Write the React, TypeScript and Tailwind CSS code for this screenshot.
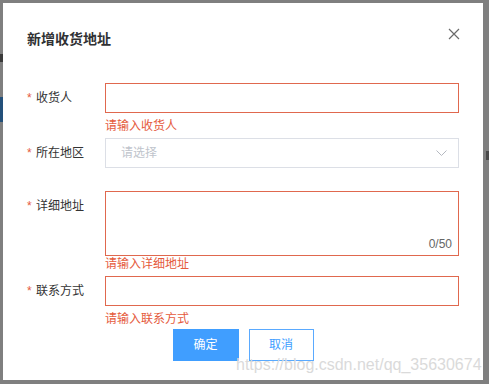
import React from "react";

const font = { fontFamily: '"Liberation Sans", "Noto Sans CJK SC", sans-serif' };

const Label: React.FC<{ text: string }> = ({ text }) => (
  <div className="w-[78px] h-[30px] flex items-center shrink-0 text-[12px] text-[#333]">
    <span className="w-[9px] text-[#e55a3c]">*</span>
    <span>{text}</span>
  </div>
);

const ErrorText: React.FC<{ text: string; className?: string }> = ({ text, className }) => (
  <div className={`ml-[78px] text-[12px] leading-[14px] text-[#e55a3c] ${className ?? ""}`}>{text}</div>
);

export default function App() {
  return (
    <div className="relative h-[384px] w-[489px] overflow-hidden bg-[#7f7f7f] pt-[3px] pl-[3px]" style={font}>
      {/* page behind the overlay */}
      <div className="absolute left-0 top-[97px] h-[25px] w-[3px] bg-[#23507a]" />
      <div className="absolute left-0 top-[54px] h-[8px] w-[3px] bg-[#3a3a3a]" />
      <div className="absolute right-0 top-[151px] h-[9px] w-[3px] bg-[#4a4a4a]" />

      <div className="relative w-[480px] h-[377px] bg-white px-[24px] pt-[27px]">
        <div className="text-[14px] leading-[18px] font-bold text-[#303133]">新增收货地址</div>
        <svg
          className="absolute top-[25px] right-[23px]"
          width="12"
          height="12"
          viewBox="0 0 12 12"
          fill="none"
          stroke="#6b6b6b"
          strokeWidth="1.2"
        >
          <path d="M1 1L11 11M11 1L1 11" />
        </svg>

        {/* 收货人 */}
        <div className="flex mt-[35px]">
          <Label text="收货人" />
          <div className="w-[354px] h-[30px] border border-[#e0684e]" />
        </div>
        <ErrorText text="请输入收货人" className="mt-[6px]" />

        {/* 所在地区 */}
        <div className="flex mt-[5px]">
          <Label text="所在地区" />
          <div className="w-[354px] h-[30px] border border-[#dcdfe6] flex items-center justify-between pl-[15px] pr-[11px]">
            <span className="text-[12px] text-[#c0c4cc]">请选择</span>
            <svg width="11" height="6" viewBox="0 0 11 6" fill="none" stroke="#b4b8c0" strokeWidth="1">
              <path d="M0.5 0.5L5.5 5.5L10.5 0.5" />
            </svg>
          </div>
        </div>

        {/* 详细地址 */}
        <div className="flex mt-[23px]">
          <Label text="详细地址" />
          <div className="relative w-[354px] h-[65px] border border-[#e0684e]">
            <span className="absolute right-[6px] bottom-[4px] text-[12px] leading-[14px] text-[#666]">0/50</span>
          </div>
        </div>
        <ErrorText text="请输入详细地址" className="mt-[1px]" />

        {/* 联系方式 */}
        <div className="flex mt-[5px]">
          <Label text="联系方式" />
          <div className="w-[354px] h-[30px] border border-[#e0684e]" />
        </div>
        <ErrorText text="请输入联系方式" className="mt-[6px]" />

        <div className="flex justify-center gap-[10px] mt-[3px]">
          <button className="w-[66px] h-[32px] bg-[#409eff] text-white text-[12px]">确定</button>
          <button className="w-[65px] h-[32px] bg-white border border-[#5aaaff] text-[#409eff] text-[12px]">取消</button>
        </div>

        {/* watermark */}
        <div className="absolute left-[233px] top-[353px] text-[16px] leading-[18px] text-[#dadada] whitespace-nowrap pointer-events-none">
          https://blog.csdn.net/qq_35630674
        </div>
      </div>
    </div>
  );
}
